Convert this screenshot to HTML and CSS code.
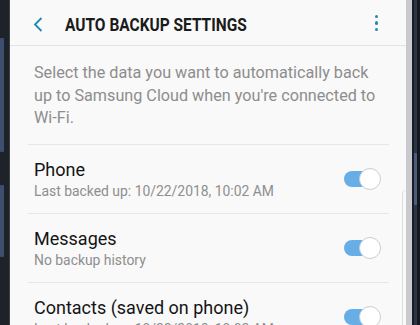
FILE: index.html
```html
<!DOCTYPE html>
<html>
<head>
<meta charset="utf-8">
<link rel="stylesheet" href="styles.css">
</head>
<body>
<div class="device">
  <div class="bezel-left">
    <span class="side-btn btn-a"></span>
    <span class="side-btn btn-b"></span>
  </div>
  <div class="screen">
    <header class="appbar">
      <svg class="back" width="10" height="15" viewBox="0 0 10 15"><path d="M8.5 1 L2 7.5 L8.5 14" fill="none" stroke="#2189b6" stroke-width="1.8"/></svg>
      <h1 class="title">AUTO BACKUP SETTINGS</h1>
      <span class="dots"><i></i><i></i><i></i></span>
    </header>
    <p class="desc">Select the data you want to automatically back<br>up to Samsung Cloud when you're connected to<br>Wi-Fi.</p>
    <ul class="list">
      <li class="row">
        <div class="text">
          <div class="name">Phone</div>
          <div class="sub">Last backed up: 10/22/2018, 10:02 AM</div>
        </div>
        <span class="toggle"><span class="track"></span><span class="thumb"></span></span>
      </li>
      <li class="row">
        <div class="text">
          <div class="name">Messages</div>
          <div class="sub">No backup history</div>
        </div>
        <span class="toggle"><span class="track"></span><span class="thumb"></span></span>
      </li>
      <li class="row">
        <div class="text">
          <div class="name">Contacts (saved on phone)</div>
          <div class="sub">Last backed up: 10/22/2018, 10:02 AM</div>
        </div>
        <span class="toggle"><span class="track"></span><span class="thumb"></span></span>
      </li>
    </ul>
    <span class="edge"></span>
  </div>
  <div class="bezel-right">
    <span class="strip-silver"></span>
    <span class="strip-dark"></span>
    <span class="strip-blue"><span class="side-btn btn-c"></span></span>
    <span class="strip-dark2"></span>
  </div>
</div>
</body>
</html>
```
FILE: styles.css
```css
* { box-sizing: border-box; }
html, body {
  margin: 0;
  padding: 0;
  width: 420px;
  height: 325px;
  overflow: hidden;
  background: #1d2028;
  font-family: Roboto, "Noto Sans", sans-serif;
}
.device {
  display: flex;
  height: 325px;
}
.bezel-left {
  width: 10px;
  background: #1e2229;
  position: relative;
  border-right: 1px solid #3a3f48;
}
.side-btn {
  position: absolute;
  background: #3d4e6e;
  border-radius: 1px;
}
.btn-a { left: 0; top: 38px; width: 4px; height: 114px; }
.btn-b { left: 0; top: 185px; width: 4px; height: 72px; }
.screen {
  flex: 1;
  background: #f9f9f9;
  position: relative;
  overflow: hidden;
}
.appbar {
  height: 46px;
  border-bottom: 1px solid #e3e3e3;
  display: flex;
  align-items: center;
  padding-top: 4px;
}
.back {
  margin-left: 23px;
  flex: none;
}
.title {
  margin: 0 0 0 22px;
  font-size: 18px;
  line-height: 24px;
  font-weight: 700;
  color: #1b1b1b;
  transform: scaleX(0.86);
  transform-origin: left center;
  white-space: nowrap;
}
.dots {
  margin-left: auto;
  margin-right: 28px;
  display: flex;
  flex-direction: column;
  gap: 3px;
  margin-top: -3px;
}
.dots i {
  display: block;
  width: 3.5px;
  height: 3.5px;
  border-radius: 50%;
  background: #2189b6;
}
.desc {
  margin: 0;
  padding: 16px 20px 14px 24px;
  font-size: 16.2px;
  line-height: 22.5px;
  color: #8d8d8d;
}
.list {
  list-style: none;
  margin: 0 17px 0 18px;
  padding: 0;
}
.row {
  border-top: 1px solid #e6e6e6;
  display: flex;
  align-items: center;
  padding: 13px 8px 12px 6px;
}
.text { flex: 1; }
.name {
  font-size: 18px;
  line-height: 23px;
  color: #141414;
}
.sub {
  font-size: 13.9px;
  line-height: 20px;
  color: #8e8e8e;
}
.toggle {
  position: relative;
  width: 37px;
  height: 22px;
  flex: none;
}
.track {
  position: absolute;
  left: 0;
  top: 3px;
  width: 30px;
  height: 16px;
  border-radius: 8px;
  background: #66aee5;
}
.thumb {
  position: absolute;
  right: 0;
  top: 0;
  width: 22px;
  height: 22px;
  border-radius: 50%;
  background: #fff;
  border: 1px solid #cdcdcd;
}
.edge {
  position: absolute;
  right: 0;
  top: 190px;
  width: 4px;
  height: 140px;
  border-left: 1px solid #dcdcdc;
  border-top: 1px solid #e6e6e6;
  border-top-left-radius: 5px;
}
.bezel-right {
  width: 14px;
  display: flex;
}
.strip-silver { width: 6px; background: #c9cacd; }
.strip-dark { width: 2px; background: #1a1d24; }
.strip-blue { width: 3px; background: #2c3547; position: relative; }
.strip-dark2 { width: 3px; background: #15181e; }
.btn-c { left: 0; top: 153px; width: 3px; height: 52px; background: #4a5c80; }
```
